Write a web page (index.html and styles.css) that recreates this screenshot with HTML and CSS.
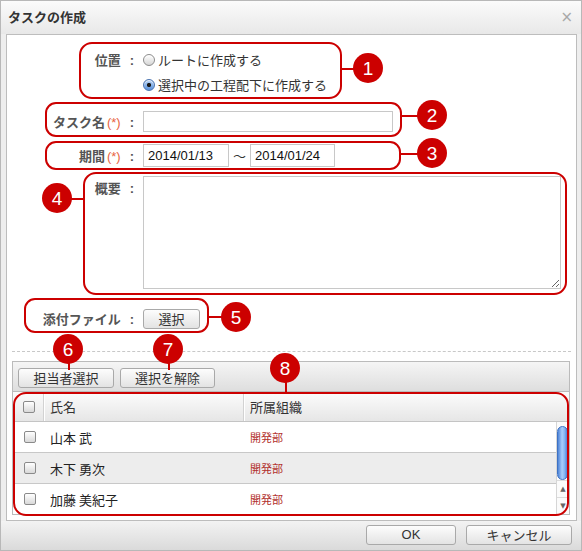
FILE: index.html
```html
<!DOCTYPE html>
<html lang="ja">
<head>
<meta charset="utf-8">
<title>タスクの作成</title>
<link rel="stylesheet" href="styles.css">
</head>
<body>
<div class="dialog">
  <div class="titlebar">
    <span class="title">タスクの作成</span>
    <span class="close">×</span>
  </div>
  <div class="panel">
    <div class="form">
      <div class="row row-pos">
        <div class="label">位置<span class="colon">:</span></div>
        <div class="ctrl radios">
          <div class="radio-line"><span class="radio"></span>ルートに作成する</div>
          <div class="radio-line"><span class="radio on"></span>選択中の工程配下に作成する</div>
        </div>
      </div>
      <div class="row row-name">
        <div class="label">タスク名<span class="req">(*)</span><span class="colon">:</span></div>
        <div class="ctrl"><input class="text name-input" type="text"></div>
      </div>
      <div class="row row-period">
        <div class="label">期間<span class="req">(*)</span><span class="colon">:</span></div>
        <div class="ctrl period">
          <input class="text date" type="text" value="2014/01/13">
          <span class="tilde">〜</span>
          <input class="text date date2" type="text" value="2014/01/24">
        </div>
      </div>
      <div class="row row-summary">
        <div class="label">概要<span class="colon">:</span></div>
        <div class="ctrl"><textarea class="summary"></textarea></div>
      </div>
      <div class="row row-attach">
        <div class="label">添付ファイル<span class="colon">:</span></div>
        <div class="ctrl"><button class="btn select-btn">選択</button></div>
      </div>
    </div>
    <div class="divider"></div>
    <div class="grid-box">
      <div class="toolbar">
        <button class="btn tb-btn1">担当者選択</button>
        <button class="btn tb-btn2">選択を解除</button>
      </div>
      <div class="thead">
        <div class="th th-check"><span class="checkbox"></span></div>
        <div class="th th-name">氏名</div>
        <div class="th th-org">所属組織</div>
      </div>
      <div class="tbody">
        <div class="rows">
          <div class="tr">
            <div class="td td-check"><span class="checkbox"></span></div>
            <div class="td td-name">山本 武</div>
            <div class="td td-org">開発部</div>
          </div>
          <div class="tr alt">
            <div class="td td-check"><span class="checkbox"></span></div>
            <div class="td td-name">木下 勇次</div>
            <div class="td td-org">開発部</div>
          </div>
          <div class="tr last">
            <div class="td td-check"><span class="checkbox"></span></div>
            <div class="td td-name">加藤 美紀子</div>
            <div class="td td-org">開発部</div>
          </div>
        </div>
        <div class="scrollbar">
          <div class="thumb"></div>
          <div class="arrows">
            <span class="arrow">▲</span>
            <span class="arrow arrow-down">▼</span>
          </div>
        </div>
      </div>
    </div>
  </div>
  <div class="footer">
    <button class="btn ok-btn">OK</button>
    <button class="btn cancel-btn">キャンセル</button>
  </div>

  <div class="annot box box1"></div>
  <div class="annot hline c1"></div>
  <div class="annot num n1">1</div>

  <div class="annot box box2"></div>
  <div class="annot hline c2"></div>
  <div class="annot num n2">2</div>

  <div class="annot box box3"></div>
  <div class="annot hline c3"></div>
  <div class="annot num n3">3</div>

  <div class="annot box box4"></div>
  <div class="annot hline c4"></div>
  <div class="annot num n4">4</div>

  <div class="annot box box5"></div>
  <div class="annot hline c5"></div>
  <div class="annot num n5">5</div>

  <div class="annot vline c6"></div>
  <div class="annot num n6">6</div>

  <div class="annot vline c7"></div>
  <div class="annot num n7">7</div>

  <div class="annot box box8"></div>
  <div class="annot vline c8"></div>
  <div class="annot num n8">8</div>
</div>
</body>
</html>
```

FILE: styles.css
```css
* { box-sizing: border-box; }
html, body { margin: 0; padding: 0; }
body {
  font-family: "Liberation Sans", "Noto Sans CJK JP", sans-serif;
  font-size: 13px;
  color: #333;
  background: #fff;
}

.dialog {
  position: relative;
  width: 582px;
  height: 551px;
  border: 1px solid #b8b8b8;
  background: #eeeeee;
  display: flex;
  flex-direction: column;
  overflow: hidden;
}

.titlebar {
  flex: none;
  height: 33px;
  display: flex;
  align-items: center;
  justify-content: space-between;
  padding: 0 8px 1px 7px;
  background: linear-gradient(#fbfbfb, #e8e8e8);
}
.title {
  font-family: "Noto Sans CJK JP", sans-serif;
  font-weight: bold;
  font-size: 13px;
  color: #333;
  line-height: 16px;
}
.close {
  font-family: "DejaVu Sans", sans-serif;
  font-size: 15px;
  color: #a8a8a8;
  line-height: 16px;
}

.panel {
  flex: none;
  height: 487px;
  margin: 0 4px 0 5px;
  background: #fff;
  border: 1px solid #bdbdbd;
}

.form { padding-top: 12px; }
.row { display: flex; }
.label {
  flex: none;
  width: 127px;
  text-align: right;
  font-family: "Noto Sans CJK JP", sans-serif;
  font-weight: bold;
  color: #555;
  font-size: 13px;
  line-height: 17px;
  white-space: nowrap;
}
.colon {
  font-family: "Liberation Sans", sans-serif;
  margin-left: 9px;
}
.req {
  font-family: "Liberation Sans", sans-serif;
  font-weight: normal;
  color: #e8643e;
  margin-left: 2px;
}
.ctrl { margin-left: 9px; }

.row-pos { height: 50px; }
.row-pos .label { line-height: 25px; }
.radios { display: flex; flex-direction: column; }
.radio-line {
  display: flex;
  align-items: center;
  height: 25px;
  font-family: "Noto Sans CJK JP", sans-serif;
  font-size: 13px;
  color: #333;
}
.radio {
  width: 12px;
  height: 12px;
  border-radius: 50%;
  border: 1px solid #8c8c8c;
  background: linear-gradient(#ffffff, #d6d6d6);
  margin-right: 3px;
  box-shadow: inset 0 1px 1px rgba(255,255,255,0.8);
}
.radio.on {
  border-color: #4b74b0;
  background:
    radial-gradient(circle, #1a1a1a 0, #1a1a1a 1.8px, transparent 2.4px),
    linear-gradient(#b8d4f6, #5a92dc);
}

.row-name { margin-top: 14px; align-items: center; height: 21px; }
.text {
  border: 1px solid #c8c8c8;
  background: #fff;
  font-family: "Liberation Sans", sans-serif;
  font-size: 13px;
  color: #111;
  padding: 0 4px;
  margin: 0;
  outline: none;
}
.name-input { width: 250px; height: 21px; display: block; }

.row-period { margin-top: 12px; align-items: center; height: 23px; }
.period { display: flex; align-items: center; }
.date { width: 86px; height: 23px; }
.date2 { width: 85px; }
.tilde {
  font-family: "Noto Sans CJK JP", sans-serif;
  margin: 0 4px;
  color: #333;
  line-height: 16px;
}

.row-summary { margin-top: 9px; }
.row-summary .label { padding-top: 3px; }
.summary {
  display: block;
  width: 418px;
  height: 113px;
  border: 1px solid #c8c8c8;
  margin: 0;
  resize: both;
  outline: none;
}

.row-attach { margin-top: 20px; align-items: center; height: 20px; }

.btn {
  height: 20px;
  border: 1px solid #a9a9a9;
  border-radius: 3px;
  background: linear-gradient(#fdfdfd, #e3e3e3);
  font-family: "Noto Sans CJK JP", sans-serif;
  font-size: 13px;
  color: #333;
  padding: 0;
  margin: 0;
  line-height: 16px;
  display: flex;
  align-items: center;
  justify-content: center;
}
.select-btn { width: 57px; }

.divider {
  margin: 22px 5px 0 5px;
  border-top: 1px dashed #c8c8c8;
}

.grid-box {
  margin: 9px 6px 0 5px;
  height: 154px;
  border: 1px solid #bbbbbb;
  display: flex;
  flex-direction: column;
}
.toolbar {
  flex: none;
  height: 30px;
  border-bottom: 1px solid #bbbbbb;
  background: linear-gradient(#f5f5f5, #dedede);
  display: flex;
  gap: 6px;
  padding: 6px 0 0 5px;
}
.tb-btn1 { width: 96px; }
.tb-btn2 { width: 95px; }

.thead {
  flex: none;
  height: 30px;
  border-bottom: 1px solid #c4c4c4;
  background: linear-gradient(#fcfcfc, #e6e6e6);
  display: flex;
}
.th {
  display: flex;
  align-items: center;
  font-family: "Noto Sans CJK JP", sans-serif;
  font-size: 13px;
  color: #333;
}
.th-check { width: 30px; justify-content: center; padding-left: 1px; }
.th-name {
  width: 200px;
  padding-left: 6px;
  border-left: 1px solid #d2d2d2;
  box-shadow: inset 1px 0 #ffffff;
}
.th-org {
  flex: 1;
  padding-left: 6px;
  border-left: 1px solid #d2d2d2;
  box-shadow: inset 1px 0 #ffffff;
}

.tbody { flex: 1; display: flex; }
.rows { flex: 1; }
.tr {
  display: flex;
  height: 31px;
  border-bottom: 1px solid #c8c8c8;
  background: #fff;
}
.tr.alt { background: #ededed; }
.tr.last { border-bottom: none; height: 30px; }
.td { display: flex; align-items: center; }
.td-check { width: 30px; justify-content: center; padding-left: 3px; }
.td-name {
  width: 200px;
  padding-left: 7px;
  font-family: "Noto Sans CJK JP", sans-serif;
  font-size: 13px;
  color: #222;
}
.td-org {
  flex: 1;
  padding-left: 7px;
  font-family: "Noto Sans CJK JP", sans-serif;
  font-size: 11px;
  color: #b2302c;
}

.checkbox {
  display: block;
  width: 12px;
  height: 12px;
  border: 1px solid #8a8a8a;
  border-radius: 2px;
  background: linear-gradient(#ffffff, #d9d9d9);
}

.scrollbar {
  flex: none;
  width: 13px;
  border-left: 1px solid #d6d6d6;
  background: #fbfbfb;
  display: flex;
  flex-direction: column;
  justify-content: space-between;
  padding-top: 4px;
}
.thumb {
  width: 11px;
  height: 54px;
  border-radius: 6px;
  border: 1px solid #3e72c4;
  background: linear-gradient(90deg, #4f85d8, #a9cdfa 45%, #8bb8f3 70%, #4f85d8);
}
.arrows { display: flex; flex-direction: column; }
.arrow {
  height: 17px;
  display: flex;
  align-items: center;
  justify-content: center;
  font-family: "DejaVu Sans", sans-serif;
  font-size: 7px;
  color: #666;
  border-top: 1px solid #dcdcdc;
}

.footer {
  flex: 1;
  display: flex;
  justify-content: flex-end;
  align-items: center;
  gap: 10px;
  padding: 0 9px 1px 0;
  background: linear-gradient(#f3f3f3, #dadada);
}
.ok-btn { width: 90px; font-family: "Liberation Sans", sans-serif; }
.cancel-btn { width: 106px; }

/* annotation overlay */
.annot { position: absolute; }
.box {
  border: 2px solid #cc0000;
  border-radius: 11px;
}
.hline { height: 2px; background: #cc0000; }
.vline { width: 2px; background: #cc0000; }
.num {
  width: 30px;
  height: 30px;
  border-radius: 50%;
  background: #cc0000;
  color: #fff;
  font-family: "Liberation Sans", sans-serif;
  font-size: 19px;
  display: flex;
  align-items: center;
  justify-content: center;
  line-height: 1;
}

.box1 { left: 78px; top: 41px; width: 263px; height: 57px; border-radius: 13px; }
.c1 { left: 340px; top: 67px; width: 14px; }
.n1 { left: 352px; top: 52px; }

.box2 { left: 44px; top: 101px; width: 357px; height: 35px; }
.c2 { left: 400px; top: 114px; width: 18px; }
.n2 { left: 416px; top: 99px; }

.box3 { left: 44px; top: 140px; width: 356px; height: 29px; }
.c3 { left: 399px; top: 152px; width: 19px; }
.n3 { left: 416px; top: 137px; }

.box4 { left: 82px; top: 171px; width: 484px; height: 123px; border-radius: 13px; }
.c4 { left: 70px; top: 197px; width: 14px; }
.n4 { left: 41px; top: 182px; }

.box5 { left: 23px; top: 297px; width: 185px; height: 35px; }
.c5 { left: 207px; top: 315px; width: 16px; }
.n5 { left: 220px; top: 301px; }

.c6 { left: 67px; top: 362px; height: 7px; }
.n6 { left: 52px; top: 333px; }

.c7 { left: 167px; top: 362px; height: 7px; }
.n7 { left: 152px; top: 333px; }

.box8 { left: 12px; top: 391px; width: 556px; height: 124px; border-radius: 13px; }
.c8 { left: 284px; top: 381px; height: 11px; }
.n8 { left: 269px; top: 352px; }
```
